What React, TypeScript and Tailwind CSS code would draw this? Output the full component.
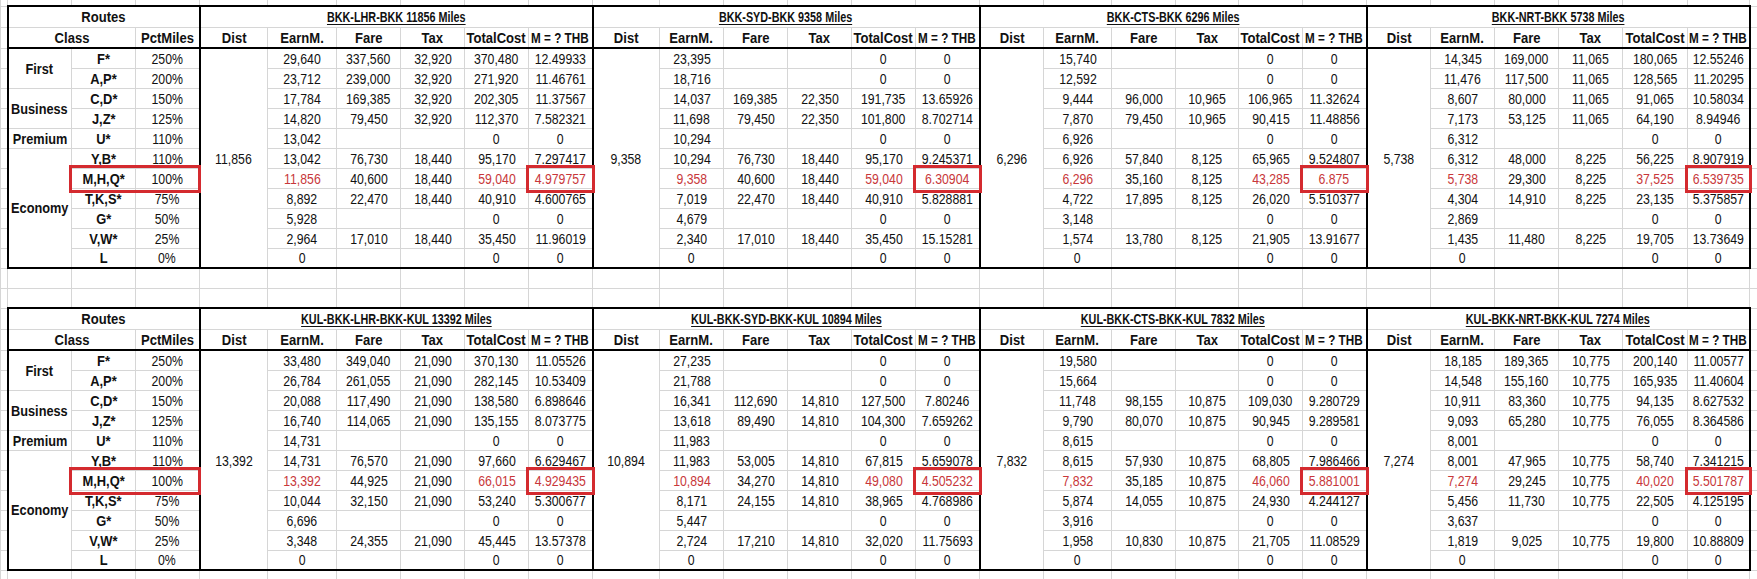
import React from "react";

type Block = { title: string; dist: string; rows: string[][] };

// spreadsheet column widths, px (edge strips at both ends)
const widths = [7, 64, 64, 64, 68, 69, 64, 64, 64, 64, 67, 64, 64, 64, 64, 64, 64, 68, 64, 63, 64, 64, 64, 64, 64, 64, 65, 62, 8];

const classes = [
  ["F*", "250%"],
  ["A,P*", "200%"],
  ["C,D*", "150%"],
  ["J,Z*", "125%"],
  ["U*", "110%"],
  ["Y,B*", "110%"],
  ["M,H,Q*", "100%"],
  ["T,K,S*", "75%"],
  ["G*", "50%"],
  ["V,W*", "25%"],
  ["L", "0%"],
];

const cabins: Record<number, [string, number]> = {
  0: ["First", 2],
  2: ["Business", 2],
  4: ["Premium", 1],
  5: ["Economy", 6],
};

const top: Block[] = [
  {
    title: "BKK-LHR-BKK 11856 Miles",
    dist: "11,856",
    rows: [
      ["29,640", "337,560", "32,920", "370,480", "12.49933"],
      ["23,712", "239,000", "32,920", "271,920", "11.46761"],
      ["17,784", "169,385", "32,920", "202,305", "11.37567"],
      ["14,820", "79,450", "32,920", "112,370", "7.582321"],
      ["13,042", "", "", "0", "0"],
      ["13,042", "76,730", "18,440", "95,170", "7.297417"],
      ["11,856", "40,600", "18,440", "59,040", "4.979757"],
      ["8,892", "22,470", "18,440", "40,910", "4.600765"],
      ["5,928", "", "", "0", "0"],
      ["2,964", "17,010", "18,440", "35,450", "11.96019"],
      ["0", "", "", "0", "0"],
    ],
  },
  {
    title: "BKK-SYD-BKK 9358 Miles",
    dist: "9,358",
    rows: [
      ["23,395", "", "", "0", "0"],
      ["18,716", "", "", "0", "0"],
      ["14,037", "169,385", "22,350", "191,735", "13.65926"],
      ["11,698", "79,450", "22,350", "101,800", "8.702714"],
      ["10,294", "", "", "0", "0"],
      ["10,294", "76,730", "18,440", "95,170", "9.245371"],
      ["9,358", "40,600", "18,440", "59,040", "6.30904"],
      ["7,019", "22,470", "18,440", "40,910", "5.828881"],
      ["4,679", "", "", "0", "0"],
      ["2,340", "17,010", "18,440", "35,450", "15.15281"],
      ["0", "", "", "0", "0"],
    ],
  },
  {
    title: "BKK-CTS-BKK 6296 Miles",
    dist: "6,296",
    rows: [
      ["15,740", "", "", "0", "0"],
      ["12,592", "", "", "0", "0"],
      ["9,444", "96,000", "10,965", "106,965", "11.32624"],
      ["7,870", "79,450", "10,965", "90,415", "11.48856"],
      ["6,926", "", "", "0", "0"],
      ["6,926", "57,840", "8,125", "65,965", "9.524807"],
      ["6,296", "35,160", "8,125", "43,285", "6.875"],
      ["4,722", "17,895", "8,125", "26,020", "5.510377"],
      ["3,148", "", "", "0", "0"],
      ["1,574", "13,780", "8,125", "21,905", "13.91677"],
      ["0", "", "", "0", "0"],
    ],
  },
  {
    title: "BKK-NRT-BKK 5738 Miles",
    dist: "5,738",
    rows: [
      ["14,345", "169,000", "11,065", "180,065", "12.55246"],
      ["11,476", "117,500", "11,065", "128,565", "11.20295"],
      ["8,607", "80,000", "11,065", "91,065", "10.58034"],
      ["7,173", "53,125", "11,065", "64,190", "8.94946"],
      ["6,312", "", "", "0", "0"],
      ["6,312", "48,000", "8,225", "56,225", "8.907919"],
      ["5,738", "29,300", "8,225", "37,525", "6.539735"],
      ["4,304", "14,910", "8,225", "23,135", "5.375857"],
      ["2,869", "", "", "0", "0"],
      ["1,435", "11,480", "8,225", "19,705", "13.73649"],
      ["0", "", "", "0", "0"],
    ],
  },
];

const bottom: Block[] = [
  {
    title: "KUL-BKK-LHR-BKK-KUL 13392 Miles",
    dist: "13,392",
    rows: [
      ["33,480", "349,040", "21,090", "370,130", "11.05526"],
      ["26,784", "261,055", "21,090", "282,145", "10.53409"],
      ["20,088", "117,490", "21,090", "138,580", "6.898646"],
      ["16,740", "114,065", "21,090", "135,155", "8.073775"],
      ["14,731", "", "", "0", "0"],
      ["14,731", "76,570", "21,090", "97,660", "6.629467"],
      ["13,392", "44,925", "21,090", "66,015", "4.929435"],
      ["10,044", "32,150", "21,090", "53,240", "5.300677"],
      ["6,696", "", "", "0", "0"],
      ["3,348", "24,355", "21,090", "45,445", "13.57378"],
      ["0", "", "", "0", "0"],
    ],
  },
  {
    title: "KUL-BKK-SYD-BKK-KUL 10894 Miles",
    dist: "10,894",
    rows: [
      ["27,235", "", "", "0", "0"],
      ["21,788", "", "", "0", "0"],
      ["16,341", "112,690", "14,810", "127,500", "7.80246"],
      ["13,618", "89,490", "14,810", "104,300", "7.659262"],
      ["11,983", "", "", "0", "0"],
      ["11,983", "53,005", "14,810", "67,815", "5.659078"],
      ["10,894", "34,270", "14,810", "49,080", "4.505232"],
      ["8,171", "24,155", "14,810", "38,965", "4.768986"],
      ["5,447", "", "", "0", "0"],
      ["2,724", "17,210", "14,810", "32,020", "11.75693"],
      ["0", "", "", "0", "0"],
    ],
  },
  {
    title: "KUL-BKK-CTS-BKK-KUL 7832 Miles",
    dist: "7,832",
    rows: [
      ["19,580", "", "", "0", "0"],
      ["15,664", "", "", "0", "0"],
      ["11,748", "98,155", "10,875", "109,030", "9.280729"],
      ["9,790", "80,070", "10,875", "90,945", "9.289581"],
      ["8,615", "", "", "0", "0"],
      ["8,615", "57,930", "10,875", "68,805", "7.986466"],
      ["7,832", "35,185", "10,875", "46,060", "5.881001"],
      ["5,874", "14,055", "10,875", "24,930", "4.244127"],
      ["3,916", "", "", "0", "0"],
      ["1,958", "10,830", "10,875", "21,705", "11.08529"],
      ["0", "", "", "0", "0"],
    ],
  },
  {
    title: "KUL-BKK-NRT-BKK-KUL 7274 Miles",
    dist: "7,274",
    rows: [
      ["18,185", "189,365", "10,775", "200,140", "11.00577"],
      ["14,548", "155,160", "10,775", "165,935", "11.40604"],
      ["10,911", "83,360", "10,775", "94,135", "8.627532"],
      ["9,093", "65,280", "10,775", "76,055", "8.364586"],
      ["8,001", "", "", "0", "0"],
      ["8,001", "47,965", "10,775", "58,740", "7.341215"],
      ["7,274", "29,245", "10,775", "40,020", "5.501787"],
      ["5,456", "11,730", "10,775", "22,505", "4.125195"],
      ["3,637", "", "", "0", "0"],
      ["1,819", "9,025", "10,775", "19,800", "10.88809"],
      ["0", "", "", "0", "0"],
    ],
  },
];

const grid = "border border-[#d6d6d6] p-0 align-middle whitespace-nowrap";
const heads = ["Dist", "EarnM.", "Fare", "Tax", "TotalCost", "M = ? THB"];

// the sheet uses a narrow face; squeeze Liberation Sans to match its widths
function Txt({ children, fit = "scale-x-[0.82]", className = "" }: { children: React.ReactNode; fit?: string; className?: string }) {
  return (
    <div className="flex justify-center">
      <span className={"inline-block shrink-0 origin-center " + fit + " " + className}>{children}</span>
    </div>
  );
}

function RedBox({ wide }: { wide?: boolean }) {
  return (
    <span
      className={
        "pointer-events-none absolute -top-[4px] -bottom-[5px] -left-[3px] z-10 border-[3px] border-[#d42a2f] " +
        (wide ? "-right-[66px]" : "-right-[3px]")
      }
    />
  );
}

function BlankRow({ h, noTop }: { h: string; noTop?: boolean }) {
  return (
    <tr className={h}>
      {widths.map((_, i) => (
        <td key={i} className={grid + (noTop ? " border-t-0" : "")} />
      ))}
    </tr>
  );
}

function Sheet({ blocks }: { blocks: Block[] }) {
  const lastBlock = blocks.length - 1;
  return (
    <>
      <tr className="h-[21px]">
        <td className={grid} />
        <td colSpan={3} className={grid + " border-t-2 border-t-black border-l-2 border-l-black border-r-2 border-r-black font-bold"}>
          <Txt fit="scale-x-[0.87]">Routes</Txt>
        </td>
        {blocks.map((b, i) => (
          <td
            key={b.title}
            colSpan={6}
            className={
              grid + " border-t-2 border-t-black border-l-2 border-l-black font-bold" + (i === lastBlock ? " border-r-2 border-r-black" : "")
            }
          >
            <Txt fit="scale-x-[0.72]" className="underline decoration-1 underline-offset-[2px]">
              {b.title}
            </Txt>
          </td>
        ))}
        <td className={grid} />
      </tr>
      <tr className="h-[21px]">
        <td className={grid} />
        <td colSpan={2} className={grid + " border-l-2 border-l-black border-b-2 border-b-black font-bold"}>
          <Txt fit="scale-x-[0.87]">Class</Txt>
        </td>
        <td className={grid + " border-r-2 border-r-black border-b-2 border-b-black font-bold"}>
          <Txt fit="scale-x-[0.87]">PctMiles</Txt>
        </td>
        {blocks.map((b, i) =>
          heads.map((h, j) => (
            <td
              key={b.title + h}
              className={
                grid +
                " border-b-2 border-b-black font-bold" +
                (j === 0 ? " border-l-2 border-l-black" : "") +
                (j === 5 && i === lastBlock ? " border-r-2 border-r-black" : "")
              }
            >
              <Txt fit={j === 5 ? "scale-x-[0.78]" : "scale-x-[0.87]"}>{h}</Txt>
            </td>
          ))
        )}
        <td className={grid} />
      </tr>
      {classes.map(([code, pct], r) => {
        const last = r === classes.length - 1;
        const hot = r === 6;
        const bb = last ? " border-b-2 border-b-black" : "";
        const cabin = cabins[r];
        return (
          <tr key={code} className="h-[20px]">
            <td className={grid} />
            {cabin && (
              <td rowSpan={cabin[1]} className={grid + " border-l-2 border-l-black font-bold" + (r === 5 ? " border-b-2 border-b-black" : "")}>
                <Txt fit="scale-x-[0.85]">{cabin[0]}</Txt>
              </td>
            )}
            <td className={grid + " relative font-bold" + bb}>
              {hot && <RedBox wide />}
              <Txt fit="scale-x-[0.86]">{code}</Txt>
            </td>
            <td className={grid + " border-r-2 border-r-black" + bb}>
              <Txt>{pct}</Txt>
            </td>
            {blocks.map((b, i) => {
              const row = b.rows[r];
              return (
                <React.Fragment key={b.title}>
                  {r === 0 && (
                    <td rowSpan={11} className={grid + " border-l-2 border-l-black border-b-2 border-b-black"}>
                      <Txt>{b.dist}</Txt>
                    </td>
                  )}
                  {row.map((v, j) => (
                    <td
                      key={j}
                      className={
                        grid +
                        bb +
                        (hot && (j === 0 || j === 3 || j === 4) ? " text-[#c8373a]" : "") +
                        (j === 4 ? " relative" : "") +
                        (j === 4 && i === lastBlock ? " border-r-2 border-r-black" : "")
                      }
                    >
                      {hot && j === 4 && <RedBox />}
                      {v && <Txt>{v}</Txt>}
                    </td>
                  ))}
                </React.Fragment>
              );
            })}
            <td className={grid} />
          </tr>
        );
      })}
    </>
  );
}

export default function App() {
  return (
    <div className="h-[579px] w-[1757px] overflow-hidden bg-white">
      <table
        className="w-[1757px] table-fixed border-collapse text-[15px] leading-none text-[#111]"
        style={{ fontFamily: "'Liberation Sans', Arial, sans-serif" }}
      >
        <colgroup>
          {widths.map((w, i) => (
            <col key={i} style={{ width: w }} />
          ))}
        </colgroup>
        <tbody>
          <BlankRow h="h-[6px]" noTop />
          <Sheet blocks={top} />
          <BlankRow h="h-[20px]" />
          <BlankRow h="h-[20px]" />
          <Sheet blocks={bottom} />
          <BlankRow h="h-[20px]" />
        </tbody>
      </table>
    </div>
  );
}
